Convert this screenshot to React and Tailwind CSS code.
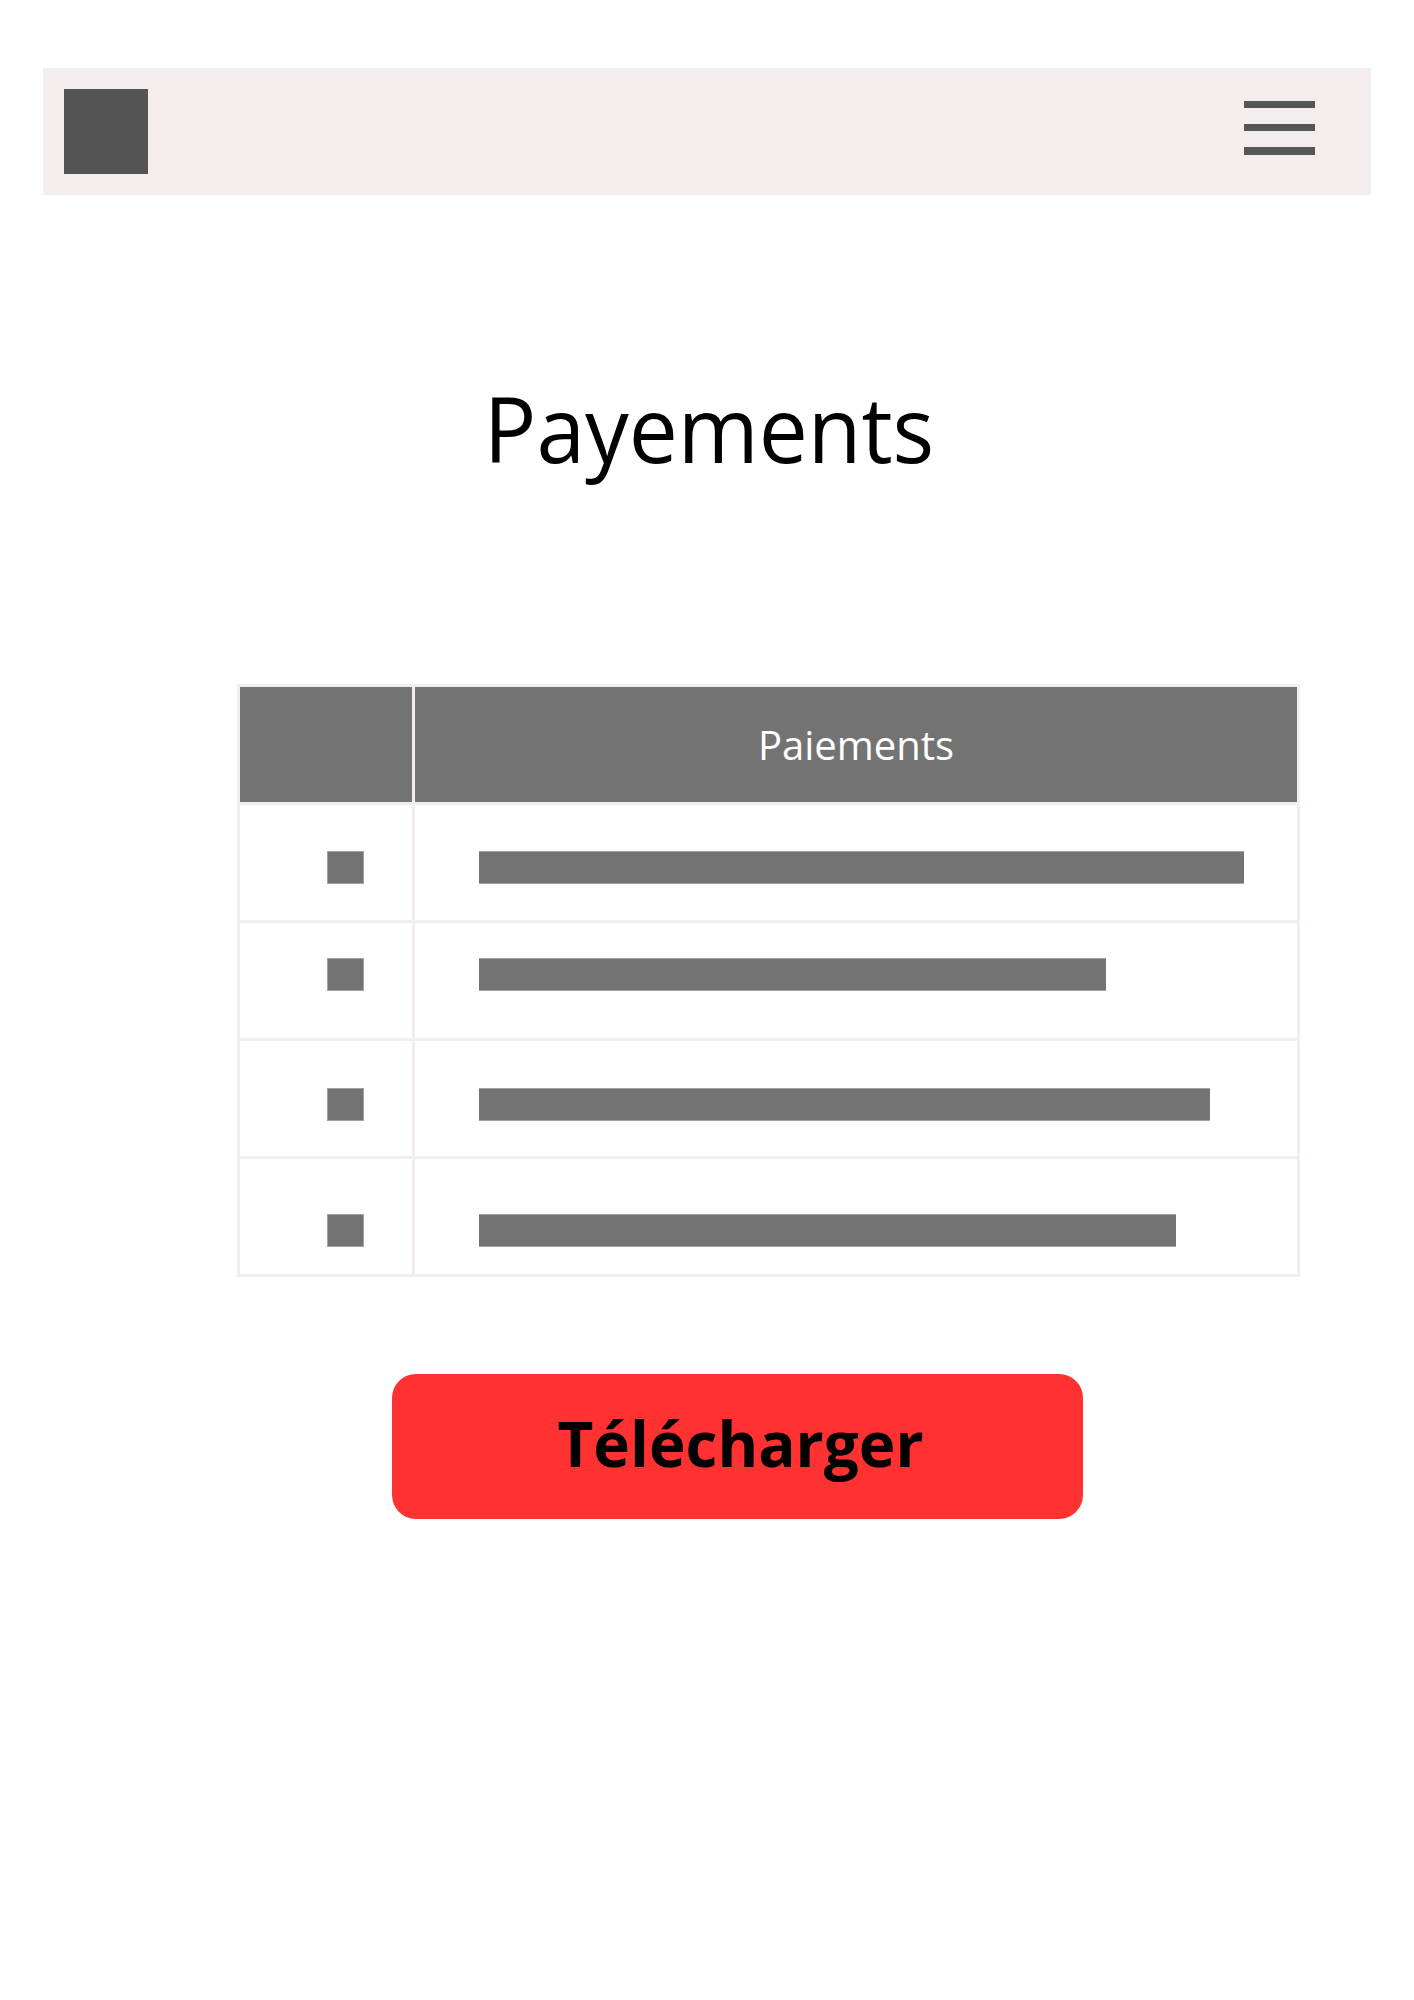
import React from "react";

const rows = [
  { pad: "pt-[46px]", bar: "w-[765px]" },
  { pad: "pt-[35px]", bar: "w-[627px]" },
  { pad: "pt-[47px]", bar: "w-[731px]" },
  { pad: "pt-[55px]", bar: "w-[697px]" },
];

export default function App() {
  return (
    <div className="w-[1414px] min-h-[2000px] bg-white pt-[68px]" style={{ fontFamily: '"Open Sans", "Liberation Sans", sans-serif' }}>
      {/* Header */}
      <div className="ml-[43px] w-[1328px] h-[127px] bg-[#f3eded] flex items-start justify-between pl-[21px] pr-[56px] pt-[21px]">
        <div className="w-[84px] h-[85px] bg-[#545454]" />
        <div className="mt-[12px] w-[71px] flex flex-col gap-[16px]">
          <div className="h-[7px] bg-[#555555]" />
          <div className="h-[7px] bg-[#555555]" />
          <div className="h-[8px] bg-[#555555]" />
        </div>
      </div>

      {/* Title */}
      <div className="mt-[187px] h-[92px] flex justify-center pl-[4px]">
        <h1 className="text-[92px] leading-[92px] font-normal text-black scale-x-[0.95] whitespace-nowrap">Payements</h1>
      </div>

      {/* Table */}
      <div className="mt-[210px] ml-[237px] w-[1063px] bg-[#f3eded] p-[3px] grid grid-cols-[172px_882px] gap-[3px]">
        <div className="h-[115px] bg-[#737373]" />
        <div className="h-[115px] bg-[#737373] flex items-center justify-center">
          <span className="text-[40px] text-white leading-none">Paiements</span>
        </div>
        {rows.map((r, i) => (
          <React.Fragment key={i}>
            <div className={`h-[115px] bg-white pl-[87px] ${r.pad}`}>
              <div className="w-[37px] h-[33px] bg-[#737373] border border-[#a3a3a3]" />
            </div>
            <div className={`h-[115px] bg-white pl-[64px] ${r.pad}`}>
              <div className={`h-[33px] bg-[#737373] border-t border-b border-[#a3a3a3] ${r.bar}`} />
            </div>
          </React.Fragment>
        ))}
      </div>

      {/* Button */}
      <div className="mt-[97px] ml-[392px] w-[691px] h-[145px] rounded-[24px] bg-[#ff3131] flex items-center justify-center pb-[8px] pl-[6px]">
        <span className="text-[62px] font-bold text-black leading-none whitespace-nowrap">Télécharger</span>
      </div>
    </div>
  );
}
